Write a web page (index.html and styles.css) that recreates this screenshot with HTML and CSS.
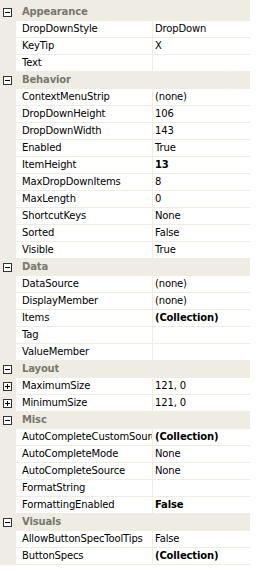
FILE: index.html
```html
<!DOCTYPE html>
<html lang="en">
<head>
    <meta charset="UTF-8">
    <title>Property Grid</title>
    <link rel="stylesheet" href="styles.css">
</head>
<body>
    <div class="grid">
        <div class="row cat"><span class="box"><svg width="9" height="9" viewBox="0 0 9 9"><rect x="0.5" y="0.5" width="8" height="8" fill="#fff" stroke="#333"/><path d="M2 4.5h5" stroke="#000"/></svg></span><span class="name">Appearance</span></div>
        <div class="row"><span class="box"></span><span class="name">DropDownStyle</span><span class="value">DropDown</span></div>
        <div class="row"><span class="box"></span><span class="name">KeyTip</span><span class="value">X</span></div>
        <div class="row"><span class="box"></span><span class="name">Text</span><span class="value"></span></div>

        <div class="row cat"><span class="box"><svg width="9" height="9" viewBox="0 0 9 9"><rect x="0.5" y="0.5" width="8" height="8" fill="#fff" stroke="#333"/><path d="M2 4.5h5" stroke="#000"/></svg></span><span class="name">Behavior</span></div>
        <div class="row"><span class="box"></span><span class="name">ContextMenuStrip</span><span class="value">(none)</span></div>
        <div class="row"><span class="box"></span><span class="name">DropDownHeight</span><span class="value">106</span></div>
        <div class="row"><span class="box"></span><span class="name">DropDownWidth</span><span class="value">143</span></div>
        <div class="row"><span class="box"></span><span class="name">Enabled</span><span class="value">True</span></div>
        <div class="row"><span class="box"></span><span class="name">ItemHeight</span><span class="value bold">13</span></div>
        <div class="row"><span class="box"></span><span class="name">MaxDropDownItems</span><span class="value">8</span></div>
        <div class="row"><span class="box"></span><span class="name">MaxLength</span><span class="value">0</span></div>
        <div class="row"><span class="box"></span><span class="name">ShortcutKeys</span><span class="value">None</span></div>
        <div class="row"><span class="box"></span><span class="name">Sorted</span><span class="value">False</span></div>
        <div class="row"><span class="box"></span><span class="name">Visible</span><span class="value">True</span></div>

        <div class="row cat"><span class="box"><svg width="9" height="9" viewBox="0 0 9 9"><rect x="0.5" y="0.5" width="8" height="8" fill="#fff" stroke="#333"/><path d="M2 4.5h5" stroke="#000"/></svg></span><span class="name">Data</span></div>
        <div class="row"><span class="box"></span><span class="name">DataSource</span><span class="value">(none)</span></div>
        <div class="row"><span class="box"></span><span class="name">DisplayMember</span><span class="value">(none)</span></div>
        <div class="row"><span class="box"></span><span class="name">Items</span><span class="value bold">(Collection)</span></div>
        <div class="row"><span class="box"></span><span class="name">Tag</span><span class="value"></span></div>
        <div class="row"><span class="box"></span><span class="name">ValueMember</span><span class="value"></span></div>

        <div class="row cat"><span class="box"><svg width="9" height="9" viewBox="0 0 9 9"><rect x="0.5" y="0.5" width="8" height="8" fill="#fff" stroke="#333"/><path d="M2 4.5h5" stroke="#000"/></svg></span><span class="name">Layout</span></div>
        <div class="row"><span class="box"><svg width="9" height="9" viewBox="0 0 9 9"><rect x="0.5" y="0.5" width="8" height="8" fill="#fff" stroke="#333"/><path d="M2 4.5h5M4.5 2v5" stroke="#000"/></svg></span><span class="name">MaximumSize</span><span class="value">121, 0</span></div>
        <div class="row"><span class="box"><svg width="9" height="9" viewBox="0 0 9 9"><rect x="0.5" y="0.5" width="8" height="8" fill="#fff" stroke="#333"/><path d="M2 4.5h5M4.5 2v5" stroke="#000"/></svg></span><span class="name">MinimumSize</span><span class="value">121, 0</span></div>

        <div class="row cat"><span class="box"><svg width="9" height="9" viewBox="0 0 9 9"><rect x="0.5" y="0.5" width="8" height="8" fill="#fff" stroke="#333"/><path d="M2 4.5h5" stroke="#000"/></svg></span><span class="name">Misc</span></div>
        <div class="row"><span class="box"></span><span class="name">AutoCompleteCustomSource</span><span class="value bold">(Collection)</span></div>
        <div class="row"><span class="box"></span><span class="name">AutoCompleteMode</span><span class="value">None</span></div>
        <div class="row"><span class="box"></span><span class="name">AutoCompleteSource</span><span class="value">None</span></div>
        <div class="row"><span class="box"></span><span class="name">FormatString</span><span class="value"></span></div>
        <div class="row"><span class="box"></span><span class="name">FormattingEnabled</span><span class="value bold">False</span></div>

        <div class="row cat"><span class="box"><svg width="9" height="9" viewBox="0 0 9 9"><rect x="0.5" y="0.5" width="8" height="8" fill="#fff" stroke="#333"/><path d="M2 4.5h5" stroke="#000"/></svg></span><span class="name">Visuals</span></div>
        <div class="row"><span class="box"></span><span class="name">AllowButtonSpecToolTips</span><span class="value">False</span></div>
        <div class="row"><span class="box"></span><span class="name">ButtonSpecs</span><span class="value bold">(Collection)</span></div>
    </div>
</body>
</html>
```

FILE: styles.css
```css
* {
    margin: 0;
    padding: 0;
    box-sizing: border-box;
}

body {
    background: #fff;
    font-family: "DejaVu Sans", sans-serif;
    font-size: 10px;
    letter-spacing: -0.15px;
    color: #000;
}

.grid {
    width: 250px;
    padding-top: 4px;
    background: #efede3;
}

.row {
    display: flex;
    height: 17px;
    border-bottom: 1px solid #efede3;
    line-height: 16px;
}

.box {
    width: 16px;
    flex: none;
    display: flex;
    align-items: center;
    padding-left: 3px;
}

.box svg {
    display: block;
}

.name {
    width: 137px;
    flex: none;
    padding-left: 6px;
    background: #fff;
    border-right: 1px solid #efede3;
    white-space: nowrap;
    overflow: hidden;
}

.value {
    flex: 1;
    padding-left: 2px;
    background: #fff;
    white-space: nowrap;
    overflow: hidden;
}

.bold {
    font-weight: bold;
}

/* category header rows */
.cat .name {
    background: none;
    border-right: none;
    width: auto;
    font-weight: bold;
    color: #77776f;
}
```
